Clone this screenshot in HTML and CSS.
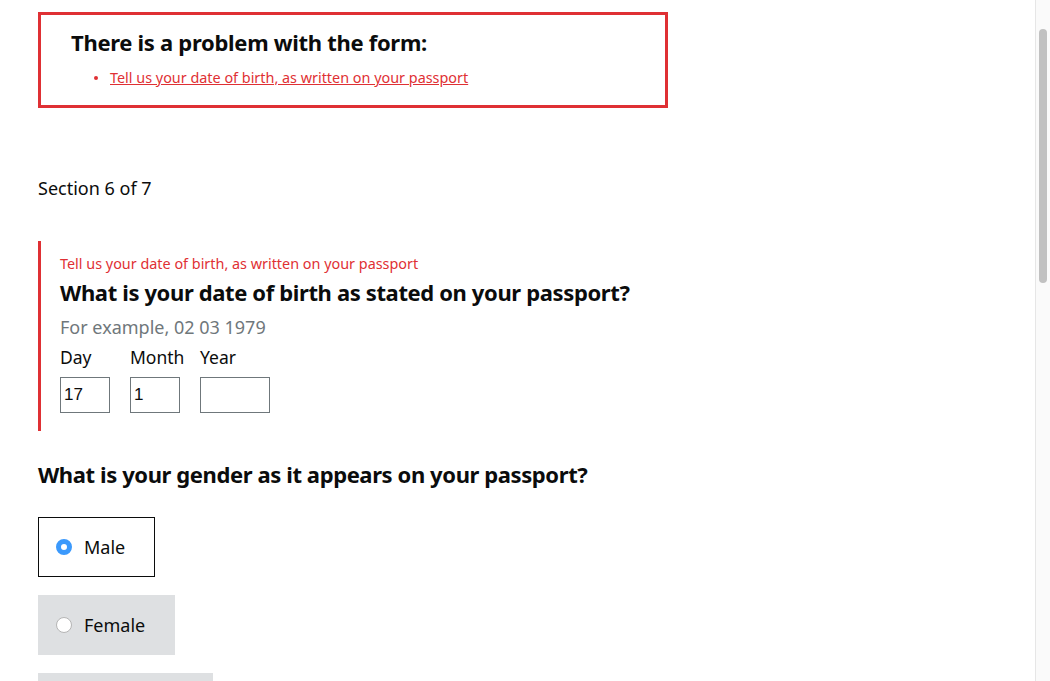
FILE: index.html
```html
<!DOCTYPE html>
<html lang="en">
<head>
<meta charset="utf-8">
<title>Date of birth</title>
<link rel="stylesheet" href="styles.css">
</head>
<body>
<main class="page">
  <div class="error-summary">
    <h2 class="error-summary-heading">There is a problem with the form:</h2>
    <ul class="error-summary-list">
      <li><a href="#dob">Tell us your date of birth, as written on your passport</a></li>
    </ul>
  </div>

  <p class="section-count">Section 6 of 7</p>

  <div class="form-group form-group-error" id="dob">
    <span class="error-message">Tell us your date of birth, as written on your passport</span>
    <h3 class="question">What is your date of birth as stated on your passport?</h3>
    <span class="hint">For example, 02 03 1979</span>
    <div class="date-fields">
      <div class="date-field short">
        <label class="date-label" for="d">Day</label>
        <input class="date-input" id="d" type="text" value="17">
      </div>
      <div class="date-field short">
        <label class="date-label" for="m">Month</label>
        <input class="date-input" id="m" type="text" value="1">
      </div>
      <div class="date-field long">
        <label class="date-label" for="y">Year</label>
        <input class="date-input" id="y" type="text" value="">
      </div>
    </div>
  </div>

  <h3 class="question gender-question">What is your gender as it appears on your passport?</h3>
  <div class="radio-list">
    <label class="radio-option selected w-male"><span class="radio-dot checked"></span><span class="radio-text">Male</span></label>
    <label class="radio-option w-female"><span class="radio-dot"></span><span class="radio-text">Female</span></label>
    <label class="radio-option w-other"><span class="radio-dot"></span><span class="radio-text">Unspecified</span></label>
  </div>
</main>
<div class="scrollbar"><div class="scrollbar-thumb"></div></div>
</body>
</html>
```
FILE: styles.css
```css
html, body {
  margin: 0;
  padding: 0;
  height: 681px;
  overflow: hidden;
  background: #ffffff;
}
body {
  font-family: "Noto Sans", "Open Sans", sans-serif;
  color: #0b0c0c;
}
.page {
  padding: 12px 0 0 38px;
}
.error-summary {
  box-sizing: border-box;
  width: 630px;
  height: 96px;
  border: 3px solid #df3034;
  padding: 13px 30px 0;
}
.error-summary-heading {
  margin: 0;
  font-size: 22px;
  line-height: 28px;
  font-weight: 700;
  letter-spacing: -0.3px;
}
.error-summary-list {
  margin: 12px 0 0;
  padding: 0 0 0 39px;
  list-style: none;
}
.error-summary-list li {
  position: relative;
  font-size: 14.4px;
  line-height: 20px;
}
.error-summary-list li::before {
  content: "";
  position: absolute;
  left: -16px;
  top: 8px;
  width: 4px;
  height: 4px;
  border-radius: 50%;
  background: #df3034;
}
.error-summary-list a {
  color: #df3034;
  text-decoration: underline;
}
.section-count {
  margin: 68px 0 0;
  font-size: 18px;
  line-height: 24px;
}
.form-group-error {
  margin-top: 41px;
  border-left: 3px solid #df3034;
  padding: 13px 0 18px 19px;
  display: flex;
  flex-direction: column;
  align-items: flex-start;
}
.error-message {
  color: #df3034;
  font-size: 14.4px;
  line-height: 20px;
}
.question {
  margin: 4px 0 0;
  font-size: 22px;
  line-height: 28px;
  font-weight: 700;
  letter-spacing: -0.37px;
}
.hint {
  margin-top: 9px;
  color: #6f777b;
  font-size: 18px;
  line-height: 24px;
}
.date-fields {
  margin-top: 6px;
  display: flex;
  gap: 20px;
}
.date-field {
  display: flex;
  flex-direction: column;
  gap: 8px;
}
.date-field.short { width: 50px; }
.date-field.long { width: 70px; }
.date-label {
  font-size: 17.5px;
  line-height: 24px;
  white-space: nowrap;
}
.date-input {
  box-sizing: border-box;
  width: 100%;
  height: 36px;
  margin: 0;
  border: 1px solid #6f777b;
  padding: 0 3px;
  font-family: "Liberation Sans", Arial, sans-serif;
  font-size: 17px;
  color: #0b0c0c;
  background: #fff;
  outline: none;
}
.gender-question {
  margin: 29px 0 0;
  letter-spacing: -0.4px;
}
.radio-list {
  margin-top: 29px;
  display: flex;
  flex-direction: column;
  align-items: flex-start;
  gap: 18px;
}
.radio-option {
  box-sizing: border-box;
  height: 60px;
  display: flex;
  align-items: center;
  gap: 12px;
  padding-left: 17px;
  border: 1px solid transparent;
  background: #dee0e2;
  font-size: 18px;
}
.radio-option.selected {
  border-color: #0b0c0c;
  background: #ffffff;
}
.w-male { width: 117px; }
.w-female { width: 137px; }
.w-other { width: 175px; }
.radio-dot {
  box-sizing: border-box;
  width: 16px;
  height: 16px;
  border-radius: 50%;
  background: #ffffff;
  border: 1px solid #b5b5b5;
  flex: none;
}
.radio-dot.checked {
  border: 5px solid #3b99fc;
  background: #ffffff;
}
.scrollbar {
  position: fixed;
  top: 0;
  right: 0;
  width: 15px;
  height: 681px;
  box-sizing: border-box;
  background: #fafafa;
  border-left: 1px solid #e6e6e6;
}
.scrollbar-thumb {
  position: absolute;
  left: 3px;
  top: 29px;
  width: 8px;
  height: 254px;
  border-radius: 4px;
  background: #c1c1c1;
}
```
